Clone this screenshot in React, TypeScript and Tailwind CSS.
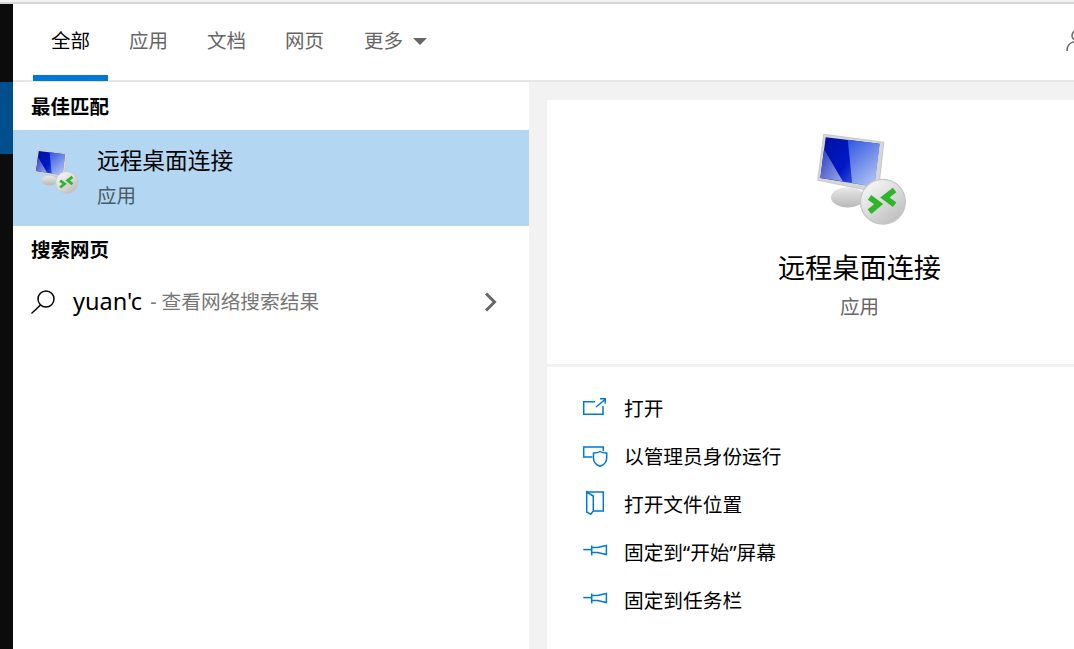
const font = "font-['Noto_Sans','Noto_Sans_CJK_SC',sans-serif]";

function RemoteIcon({ className }: { className: string }) {
  return (
    <svg viewBox="110 70 275 280" className={className}>
      <defs>
        <linearGradient id="scr" x1="0" y1="0" x2="1" y2="0.6">
          <stop offset="0" stopColor="#00109a" />
          <stop offset="0.55" stopColor="#0018c8" />
          <stop offset="1" stopColor="#5a78e0" />
        </linearGradient>
        <linearGradient id="orb" x1="0" y1="0" x2="0.8" y2="1">
          <stop offset="0" stopColor="#ffffff" />
          <stop offset="1" stopColor="#bcbcbc" />
        </linearGradient>
        <linearGradient id="disc" x1="0" y1="0" x2="0" y2="1">
          <stop offset="0" stopColor="#e8e8e8" />
          <stop offset="1" stopColor="#b8b8b8" />
        </linearGradient>
        <linearGradient id="shine" x1="0" y1="0" x2="0.6" y2="1">
          <stop offset="0" stopColor="#2f55e0" />
          <stop offset="1" stopColor="#a9bcf2" />
        </linearGradient>
        <linearGradient id="corner" x1="0" y1="0" x2="1" y2="1">
          <stop offset="0" stopColor="#2a3ec0" />
          <stop offset="1" stopColor="#9aa8e8" />
        </linearGradient>
      </defs>
      <ellipse cx="205" cy="262" rx="50" ry="30" fill="url(#disc)" />
      <path d="M133 73 L313 97 L296 247 L115 211 Z" fill="#d6d6d6" stroke="#b8b8b8" strokeWidth="2" />
      <path d="M139 82 L300 102 L284 230 L123 204 Z" fill="url(#scr)" />
      <path d="M205 90 L300 102 L284 230 L218 219 Z" fill="url(#shine)" />
      <path d="M134 118 L190 214 L123 204 Z" fill="url(#corner)" />
      <circle cx="310" cy="275" r="67" fill="url(#orb)" stroke="#c6c6c6" strokeWidth="4" />
      <path d="M270 262 L297 282 L270 305" fill="none" stroke="#2fb52a" strokeWidth="17" />
      <path d="M345 240 L316 262 L345 284" fill="none" stroke="#2fb52a" strokeWidth="17" />
    </svg>
  );
}

function OpenIcon() {
  return (
    <svg viewBox="0 0 26 24" className="w-[26px] h-6 overflow-visible" fill="none" stroke="#0078d7" strokeWidth="1.5">
      <path d="M13 4.7H1.7V17.3H21V9" />
      <path d="M14 10L23 2.5M18 1.8H23.2V6.5" />
    </svg>
  );
}

function ShieldIcon() {
  return (
    <svg viewBox="0 0 26 24" className="w-[26px] h-6 overflow-visible" fill="none" stroke="#0078d7" strokeWidth="1.5">
      <path d="M21.3 6V2H1.7V12H10.5" />
      <path d="M11.5 8C14 8 16.5 7.5 18 6.5C19.5 7.5 22 8 24.7 8V13C24.7 17 21.5 20 18 21.2C14.5 20 11.5 17 11.5 13Z" />
    </svg>
  );
}

function FolderIcon() {
  return (
    <svg viewBox="0 0 26 24" className="w-[26px] h-6 overflow-visible" fill="none" stroke="#0078d7" strokeWidth="1.5">
      <path d="M4.7 -1H21.3V18H11.3" />
      <path d="M4.7 -1L11.3 3V18L8.7 21.3L4.7 19Z" />
    </svg>
  );
}

function PinIcon() {
  return (
    <svg viewBox="0 0 26 24" className="w-[26px] h-6 overflow-visible" fill="none" stroke="#0078d7" strokeWidth="1.5">
      <path d="M1.3 8.6H9.7" />
      <path d="M9.7 4.5V14.5" />
      <path d="M9.7 6.5H15.5L24.4 4.5V13.5L15.5 11.5H9.7" />
    </svg>
  );
}

function PersonIcon() {
  return (
    <svg viewBox="0 0 24 24" className="w-6 h-6 shrink-0" fill="none" stroke="#666" strokeWidth="1.5">
      <circle cx="11" cy="7.5" r="5" />
      <path d="M1 23C1 17 5 13.5 11 13.5C17 13.5 21 17 21 23" />
    </svg>
  );
}

const tabs = ["应用", "文档", "网页"];
const actions = [
  { label: "打开", icon: <OpenIcon /> },
  { label: "以管理员身份运行", icon: <ShieldIcon /> },
  { label: "打开文件位置", icon: <FolderIcon /> },
  { label: "固定到“开始”屏幕", icon: <PinIcon /> },
  { label: "固定到任务栏", icon: <PinIcon /> },
];

export default function App() {
  return (
    <div className={`${font} w-[1074px] h-[649px] flex flex-col overflow-hidden bg-white text-black`}>
      <div className="h-[2px] shrink-0 bg-[#f4f4f4]" />
      <div className="h-[2px] shrink-0 bg-[#d6d6d6]" />
      <div className="flex flex-1 min-h-0">
        {/* Start menu strip behind the window */}
        <div className="w-[13px] shrink-0 flex flex-col bg-[#0c0c0c]">
          <div className="h-[78px]" />
          <div className="h-[72px] bg-[#004e8c]" />
        </div>

        <div className="flex-1 min-w-0 flex flex-col">
          {/* Tabs */}
          <div className="h-[78px] shrink-0 flex items-start gap-[3px] pl-5 border-b-2 border-[#e6e6e6]">
            <div className="h-[77px] w-[75px] flex items-center justify-center border-b-[6px] border-[#0078d7] text-[19.5px] pt-[3px]">
              全部
            </div>
            {tabs.map((t) => (
              <div key={t} className="h-[74px] w-[75px] flex items-center justify-center text-[19.5px] text-[#666666]">
                {t}
              </div>
            ))}
            <div className="h-[74px] ml-[19px] flex items-center gap-[10px] text-[19.5px] text-[#666666]">
              更多
              <span className="w-0 h-0 border-x-[7px] border-x-transparent border-t-[7px] border-t-[#666666]" />
            </div>
            <div className="ml-auto mr-[-16px] h-[72px] flex items-center">
              <PersonIcon />
            </div>
          </div>

          <div className="flex-1 min-h-0 flex">
            {/* Results */}
            <div className="w-[516px] shrink-0">
              <div className="h-12 pl-[18px] pt-[2px] flex items-center text-[19.5px] font-bold">最佳匹配</div>
              <div className="h-24 bg-[#b3d7f2] flex">
                <div className="w-[84px] shrink-0 pl-[21px] pt-[19px]">
                  <RemoteIcon className="w-[45px] h-[46px]" />
                </div>
                <div className="flex flex-col pt-[17px] gap-[7px]">
                  <div className="h-7 flex items-center text-[22.7px]">远程桌面连接</div>
                  <div className="h-7 flex items-center text-[19.5px] text-[#4c5a65]">应用</div>
                </div>
              </div>
              <div className="h-12 pl-[18px] flex items-center text-[19.5px] font-bold">搜索网页</div>
              <div className="h-14 pl-[17px] pr-[31px] flex items-center">
                <svg viewBox="0 0 26 26" className="w-[26px] h-[26px] shrink-0" fill="none" stroke="#000" strokeWidth="1.5">
                  <circle cx="16" cy="10" r="8" />
                  <path d="M10.5 16L1.5 24.5" />
                </svg>
                <span className="ml-[17px] text-[23.5px]">yuan'c</span>
                <span className="ml-2 text-[19.7px] text-[#767676]">- 查看网络搜索结果</span>
                <svg viewBox="0 0 14 20" className="ml-auto w-[14px] h-5" fill="none" stroke="#666" strokeWidth="3">
                  <path d="M2 1.5L10.5 10L2 18.5" />
                </svg>
              </div>
            </div>

            {/* Detail pane, wider than the window so its right edge is cut off */}
            <div className="w-[643px] shrink-0 bg-[#f2f2f2] pl-[18px] pt-[18px] flex flex-col">
              <div className="h-[264px] shrink-0 bg-white flex flex-col items-center">
                <RemoteIcon className="mt-[33px] w-[92px] h-[94px] ml-[5px]" />
                <div className="mt-[18px] h-[46px] flex items-center text-[27.2px]">远程桌面连接</div>
                <div className="mt-[2px] h-7 flex items-center text-[19.5px] text-[#666666]">应用</div>
              </div>
              <div className="flex-1 mt-[3px] bg-white pt-[18px]">
                {actions.map((a) => (
                  <div key={a.label} className="h-12 flex items-center pl-[35px] gap-4 text-[19.7px]">
                    {a.icon}
                    <span>{a.label}</span>
                  </div>
                ))}
              </div>
            </div>
          </div>
        </div>
      </div>
    </div>
  );
}
